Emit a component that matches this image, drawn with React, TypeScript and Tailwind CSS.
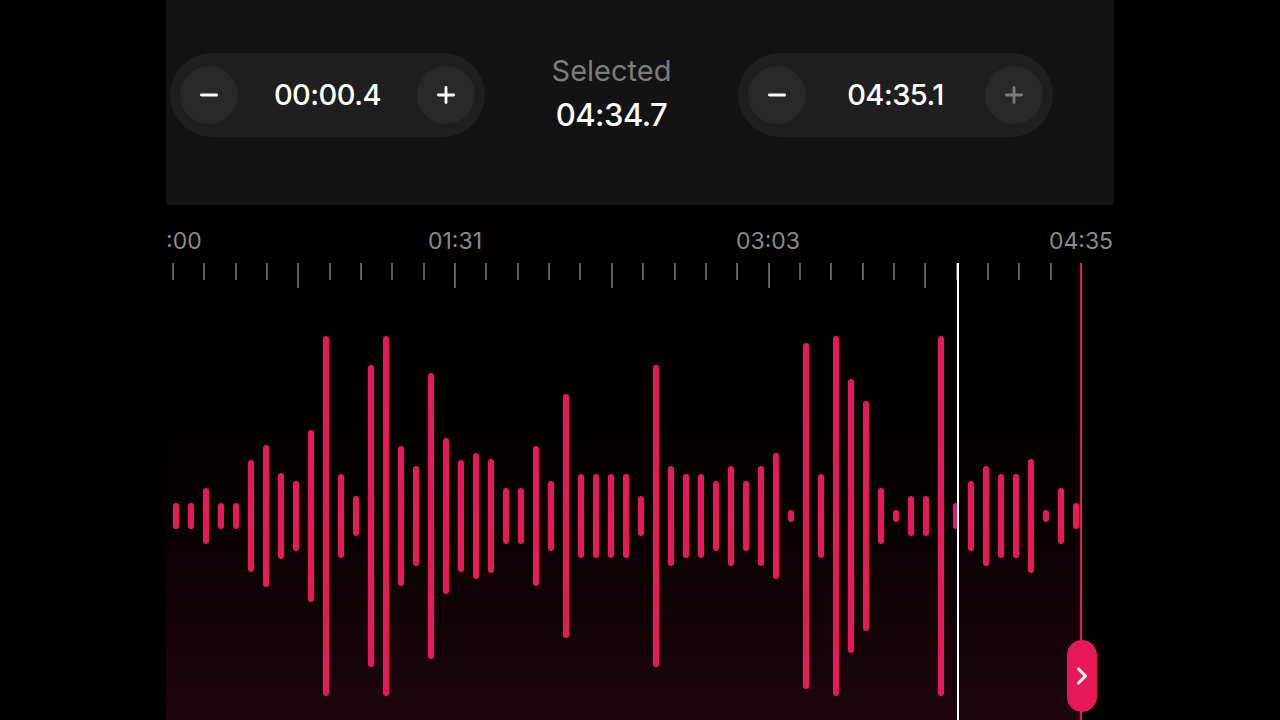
import { Minus, Plus, ChevronRight } from "lucide-react";

// half-heights of each waveform bar, in px, left to right
const BARS = [
  13, 13, 28, 13, 13, 56, 71, 43, 35, 86, 180, 42, 20, 151, 180, 70, 50, 143, 78, 56, 63,
  57, 28, 28, 70, 35, 122, 42, 42, 42, 42, 20, 151, 50, 42, 42, 35, 50, 35, 50, 63, 6,
  173, 42, 180, 137, 115, 28, 6, 20, 20, 180, 13, 35, 50, 42, 42, 57, 6, 28, 13,
];

const TICKS = Array.from({ length: 29 }, (_, i) => i);

const Stepper = ({ value, plusDim }: { value: string; plusDim?: boolean }) => (
  <div className="w-[315px] h-[84px] rounded-full bg-[#1f1f1f] flex items-center justify-between px-[10px]">
    <button className="w-[58px] h-[58px] rounded-full bg-[#282828] flex items-center justify-center text-white">
      <Minus size={26} strokeWidth={2.6} />
    </button>
    <div className="text-white text-[29px] font-medium tracking-[-0.5px]">{value}</div>
    <button
      className={`w-[58px] h-[58px] rounded-full bg-[#282828] flex items-center justify-center ${
        plusDim ? "text-[#7a7a7a]" : "text-white"
      }`}
    >
      <Plus size={26} strokeWidth={2.6} />
    </button>
  </div>
);

export default function App() {
  return (
    <div
      className="w-screen h-screen bg-black flex justify-center overflow-hidden"
      style={{ fontFamily: "Inter, 'Noto Sans', sans-serif" }}
    >
      <div className="w-[948px] flex flex-col">
        {/* top trim panel */}
        <div className="h-[205px] shrink-0 bg-[#131313] flex items-start pt-[53px] px-[4px]">
          <Stepper value="00:00.4" />
          <div className="w-[253px] flex flex-col items-center">
            <div className="text-[#7c7c7c] text-[29px] leading-[36px]">Selected</div>
            <div className="text-white text-[31px] font-medium leading-[40px] mt-[6px] tracking-[-0.5px]">
              04:34.7
            </div>
          </div>
          <Stepper value="04:35.1" plusDim />
        </div>

        {/* time labels */}
        <div className="h-[58px] shrink-0 flex items-center text-[#8a8a8a] text-[23px] pt-[14px]">
          <div className="w-0 flex">
            <span>:00</span>
          </div>
          <div className="w-[289px] shrink-0" />
          <div className="w-0 flex justify-center">
            <span>01:31</span>
          </div>
          <div className="w-[313px] shrink-0" />
          <div className="w-0 flex justify-center">
            <span>03:03</span>
          </div>
          <div className="w-[313px] shrink-0" />
          <div className="w-0 flex justify-center">
            <span>04:35</span>
          </div>
        </div>

        {/* ruler + waveform */}
        <div className="relative h-[457px] shrink-0 overflow-hidden">
          <div className="w-[915px] h-full bg-linear-to-b from-black to-[#1f050e]">
            <div className="h-[25px] w-[880px] ml-[6px] flex justify-between items-start">
              {TICKS.map((i) => (
                <div
                  key={i}
                  className={`w-[2px] bg-[#5c5c5c] ${i % 5 === 4 ? "h-[25px]" : "h-[17px]"}`}
                />
              ))}
            </div>
            <div className="h-[440px] mt-[8px] flex items-center gap-[9px] pl-[7px]">
              {BARS.map((h, i) => (
                <div
                  key={i}
                  className="w-[6px] shrink-0 rounded-full bg-[#e8195a]"
                  style={{ height: Math.max(h * 2, 11) }}
                />
              ))}
            </div>
          </div>

          {/* playhead */}
          <div className="absolute top-0 bottom-0 left-[791px] w-[2px] bg-white" />
          {/* end marker */}
          <div className="absolute top-0 bottom-0 left-[914px] w-[2px] bg-[#e8195a]" />
          <div className="absolute top-[377px] left-[901px] w-[30px] h-[72px] rounded-full bg-[#e8195a] flex items-center justify-center text-white">
            <ChevronRight size={28} strokeWidth={2.6} />
          </div>
        </div>
      </div>
    </div>
  );
}
